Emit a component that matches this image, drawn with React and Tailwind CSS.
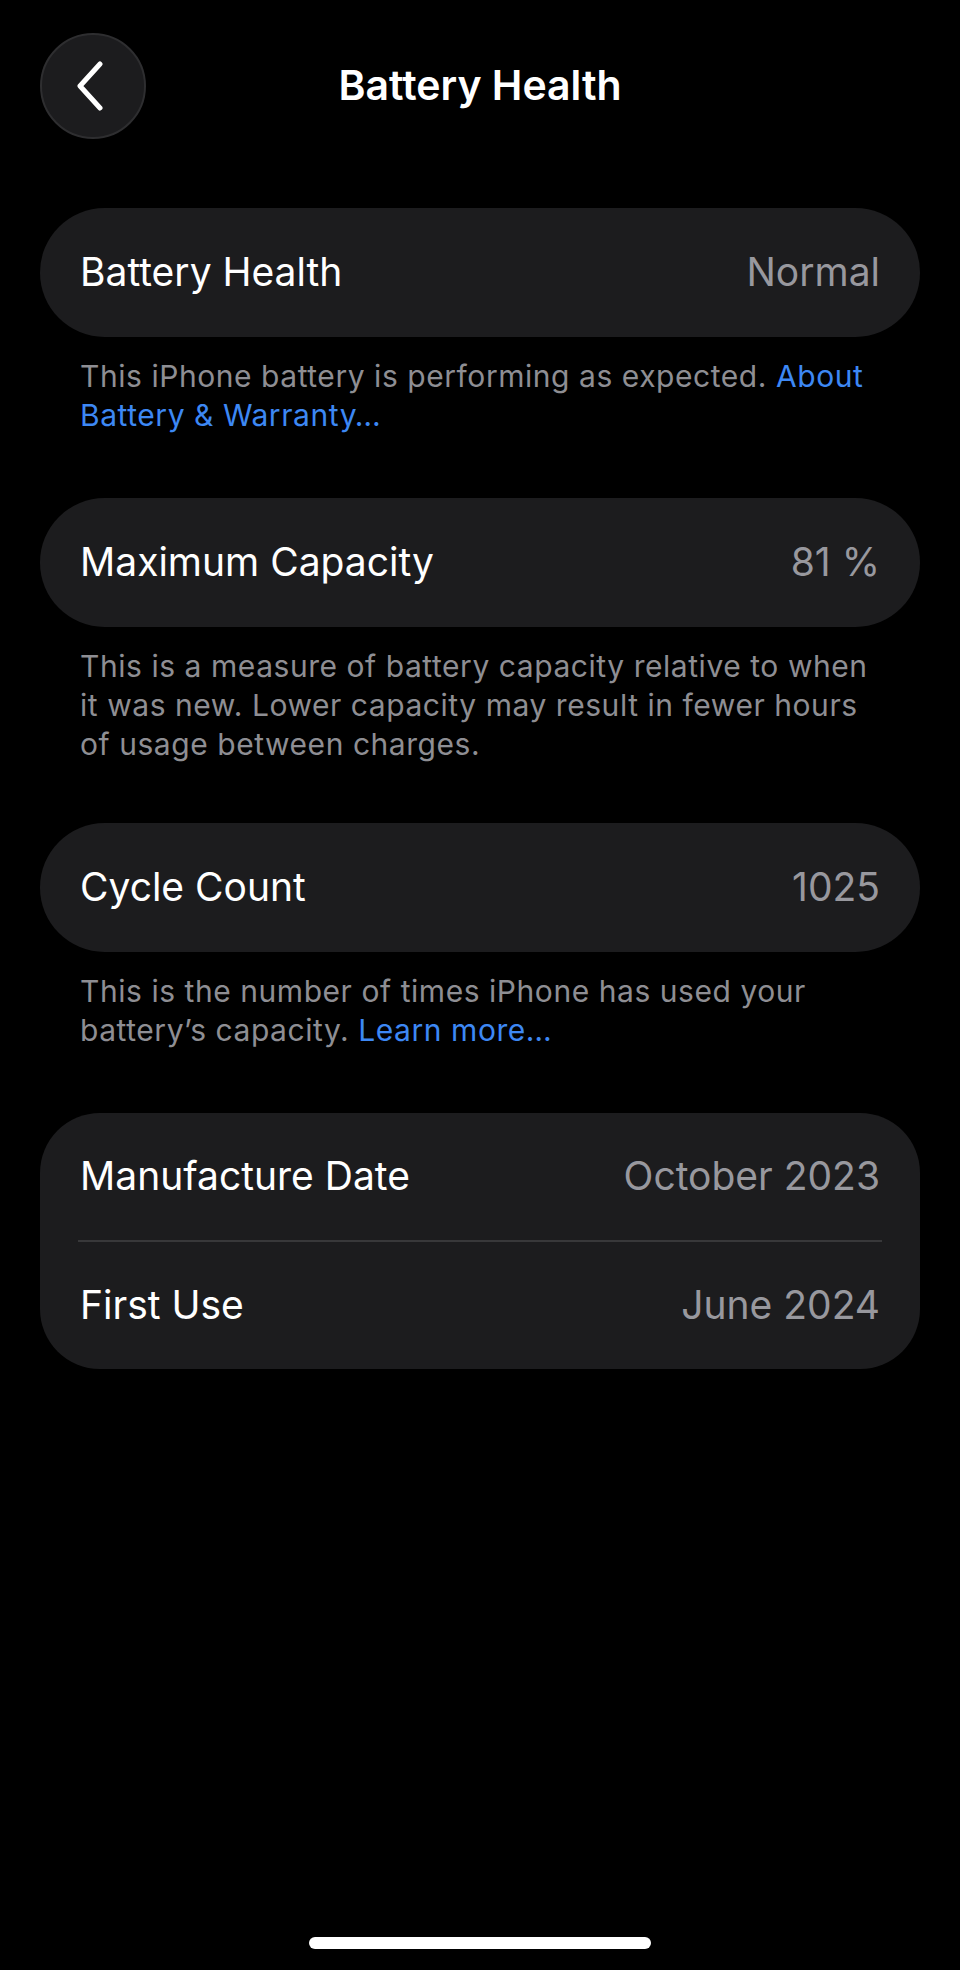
const rows = [
  {
    label: 'Battery Health',
    value: 'Normal',
    gap: 'mb-[63px]',
    note: (
      <>
        This iPhone battery is performing as expected.{' '}
        <span className="text-[#3d88f4]">About Battery &amp; Warranty…</span>
      </>
    ),
  },
  {
    label: 'Maximum Capacity',
    value: '81 %',
    gap: 'mb-[59px]',
    note: 'This is a measure of battery capacity relative to when it was new. Lower capacity may result in fewer hours of usage between charges.',
  },
  {
    label: 'Cycle Count',
    value: '1025',
    gap: 'mb-[63px]',
    note: (
      <>
        This is the number of times iPhone has used your battery’s capacity.{' '}
        <span className="text-[#3d88f4]">Learn more…</span>
      </>
    ),
  },
]

function Row({ label, value }) {
  return (
    <div className="flex h-[127px] items-center justify-between px-[40px]">
      <span className="text-white">{label}</span>
      <span className="text-[#98989e]">{value}</span>
    </div>
  )
}

export default function App() {
  return (
    <div
      className="flex min-h-[1970px] w-full flex-col bg-black text-[39px] antialiased"
      style={{ fontFamily: 'Inter, "Noto Sans", sans-serif' }}
    >
      <header className="grid grid-cols-[106px_1fr_106px] items-center px-[40px] pt-[33px]">
        <button className="flex h-[106px] w-[106px] items-center justify-center rounded-full border-2 border-[#2e2e30] bg-[#1c1c1e]">
          <svg width="34" height="50" viewBox="0 0 34 50" className="-ml-[6px]">
            <path d="M27 3 L7 25 L27 47" fill="none" stroke="white" strokeWidth="5" strokeLinecap="round" strokeLinejoin="round" />
          </svg>
        </button>
        <h1 className="text-center text-[41px] font-semibold text-white">Battery Health</h1>
        <div />
      </header>

      <main className="mt-[69px] px-[40px]">
        {rows.map((row) => (
          <section key={row.label} className={row.gap}>
            <div className="flex h-[129px] items-center justify-between rounded-full bg-[#1c1c1e] px-[40px]">
              <span className="text-white">{row.label}</span>
              <span className="text-[#98989e]">{row.value}</span>
            </div>
            <p className="mt-[20px] px-[40px] text-[30px] leading-[39px] tracking-[0.55px] text-[#8e8e93]">{row.note}</p>
          </section>
        ))}

        <div className="rounded-[60px] bg-[#1c1c1e]">
          <Row label="Manufacture Date" value="October 2023" />
          <div className="mx-[38px] h-[2px] bg-[#38383a]" />
          <Row label="First Use" value="June 2024" />
        </div>
      </main>

      <div className="flex-1" />
      <div className="flex justify-center pb-[21px]">
        <div className="h-[12px] w-[342px] rounded-full bg-white" />
      </div>
    </div>
  )
}
